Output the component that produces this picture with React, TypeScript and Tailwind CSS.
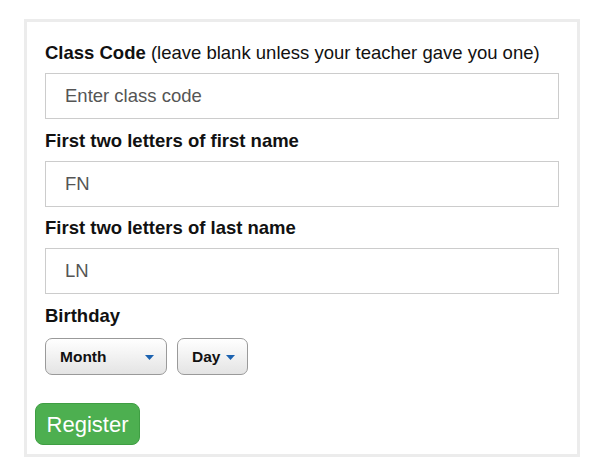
import React from 'react';

function Field({ label, placeholder }: { label: React.ReactNode; placeholder: string }) {
  return (
    <div className="flex flex-col">
      <label className="mb-[9px] text-[18.5px] leading-[22px] text-[#111]">{label}</label>
      <input
        type="text"
        placeholder={placeholder}
        className="h-[46px] w-full border border-[#cccccc] bg-white px-[19px] text-[18.5px] text-[#333] outline-none placeholder:text-[#555]"
      />
    </div>
  );
}

function FakeSelect({ text, width }: { text: string; width: string }) {
  return (
    <div
      className={`flex h-[37px] items-center justify-between rounded-[7px] border border-[#9a9a9a] bg-gradient-to-b from-white to-[#e4e4e4] pl-[14px] pr-[12px] ${width}`}
    >
      <span className="text-[15.5px] font-bold text-[#111]">{text}</span>
      <svg width="9" height="5" viewBox="0 0 9 5" className="mt-[1px]">
        <path d="M0 0 H9 L4.5 5 Z" fill="#1b62b0" />
      </svg>
    </div>
  );
}

export default function App() {
  return (
    <div className="min-h-[475px] bg-white pl-[24px] pt-[19px] font-['Liberation_Sans',Arial,sans-serif]">
      <div className="flex h-[438px] w-[556px] flex-col border-[3px] border-[#ececec] bg-white px-[18px] pt-[20px]">
        {/* Class code */}
        <Field
          label={
            <>
              <span className="font-bold">Class Code</span> (leave blank unless your teacher gave you one)
            </>
          }
          placeholder="Enter class code"
        />

        <div className="mt-[11px]">
          <Field label={<span className="font-bold">First two letters of first name</span>} placeholder="FN" />
        </div>

        <div className="mt-[10px]">
          <Field label={<span className="font-bold">First two letters of last name</span>} placeholder="LN" />
        </div>

        {/* Birthday */}
        <div className="mt-[11px] flex flex-col">
          <span className="mb-[11px] text-[18.5px] font-bold leading-[22px] text-[#111]">Birthday</span>
          <div className="flex gap-[10px]">
            <FakeSelect text="Month" width="w-[122px]" />
            <FakeSelect text="Day" width="w-[71px]" />
          </div>
        </div>

        <div className="-ml-[10px] mt-[28px]">
          <button className="flex h-[42px] w-[105px] items-center justify-center rounded-[8px] border border-[#3f9e43] bg-[#4daf50] text-[22px] text-white">
            Register
          </button>
        </div>
      </div>
    </div>
  );
}
